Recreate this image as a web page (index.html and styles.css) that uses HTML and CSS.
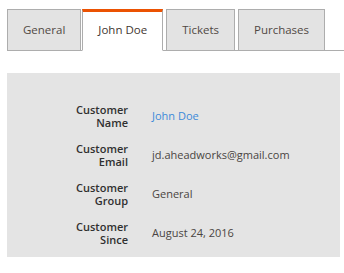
FILE: index.html
```html
<!DOCTYPE html>
<html lang="en">
<head>
    <meta charset="UTF-8">
    <meta name="viewport" content="width=device-width, initial-scale=1.0">
    <title>Customer</title>
    <link rel="stylesheet" href="styles.css">
</head>
<body>
    <div class="page">
        <ul class="tabs">
            <li class="tab">General</li>
            <li class="tab active">John Doe</li>
            <li class="tab">Tickets</li>
            <li class="tab">Purchases</li>
        </ul>
        <div class="info-panel">
            <div class="info-label">Customer<br>Name</div>
            <div class="info-value"><a href="#" class="info-link">John Doe</a></div>
            <div class="info-label">Customer<br>Email</div>
            <div class="info-value">jd.aheadworks@gmail.com</div>
            <div class="info-label">Customer<br>Group</div>
            <div class="info-value">General</div>
            <div class="info-label">Customer<br>Since</div>
            <div class="info-value">August 24, 2016</div>
        </div>
    </div>
</body>
</html>
```

FILE: styles.css
```css
body {
    margin: 0;
    font-family: 'Open Sans', sans-serif;
    background-color: #ffffff;
    color: #41362f;
}
.page {
    padding: 9px 0 0 7px;
}
.tabs {
    display: flex;
    list-style: none;
    margin: 0;
    padding: 0;
    border-bottom: 1px solid #adadad;
}
.tab {
    margin: 0 3px -1px 0;
    padding: 0 15px;
    line-height: 40px;
    font-size: 11.5px;
    color: #514943;
    background-color: #e3e3e3;
    border: 1px solid #adadad;
}
.tab:first-child {
    margin-right: 1px;
}
.tab.active {
    background-color: #ffffff;
    color: #41362f;
    border-top: 3px solid #eb5202;
    border-bottom-color: #ffffff;
    line-height: 35px;
    padding-bottom: 3px;
}
.info-panel {
    width: 333px;
    margin-top: 22px;
    padding: 30px 0 11px;
    background-color: #e4e4e4;
    display: grid;
    grid-template-columns: 121px 1fr;
    column-gap: 24px;
    row-gap: 13px;
    font-size: 11px;
    line-height: 13px;
}
.info-label {
    text-align: right;
    font-weight: 600;
    color: #303030;
}
.info-value {
    align-self: center;
    margin-top: -2px;
    color: #4a4542;
}
.info-link {
    color: #3d8ad9;
    text-decoration: none;
}
```
